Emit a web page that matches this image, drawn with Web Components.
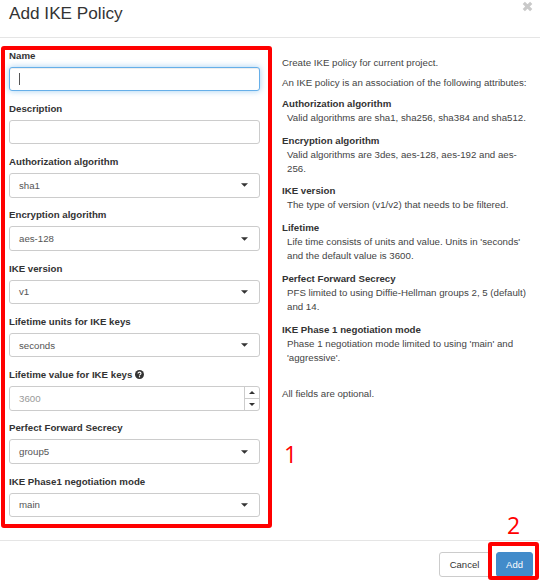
<!DOCTYPE html>
<html><head><meta charset="utf-8">
<style>
html,body{margin:0;padding:0;background:#fff}
body{font-family:"Liberation Sans",Arial,sans-serif;color:#333;width:540px;height:580px;overflow:hidden}
</style></head><body>
<ike-modal>
  <span slot="title">Add IKE Policy</span>
  <form-field label="Name"><text-box focused></text-box></form-field>
  <form-field label="Description"><text-box></text-box></form-field>
  <form-field label="Authorization algorithm"><select-box value="sha1"></select-box></form-field>
  <form-field label="Encryption algorithm"><select-box value="aes-128"></select-box></form-field>
  <form-field label="IKE version"><select-box value="v1"></select-box></form-field>
  <form-field label="Lifetime units for IKE keys"><select-box value="seconds"></select-box></form-field>
  <form-field label="Lifetime value for IKE keys" help><number-box placeholder="3600"></number-box></form-field>
  <form-field label="Perfect Forward Secrecy"><select-box value="group5"></select-box></form-field>
  <form-field label="IKE Phase1 negotiation mode"><select-box value="main"></select-box></form-field>
  <help-panel slot="help"></help-panel>
</ike-modal>
<script>
function def(name, css, html){
  customElements.define(name, class extends HTMLElement{
    connectedCallback(){
      if(this.shadowRoot) return;
      const r=this.attachShadow({mode:"open"});
      r.innerHTML="<style>"+css+"</style>"+(typeof html==="function"?html(this):html);
    }
  });
}
const caret='<svg width="7" height="4" viewBox="0 0 8 4"><path d="M0 0H8L4 4Z" fill="#333"/></svg>';
def("ike-modal",`
:host{display:block;position:relative;width:540px;height:580px;overflow:hidden}
header{height:37px;border-bottom:1px solid #e5e5e5;box-sizing:content-box;display:flex;justify-content:space-between;position:relative}
h4{margin:0;padding:3px 0 0 9px;font-size:17.2px;font-weight:400;line-height:20px;color:#333}
.x{padding:1px 7px 0 0}
.x svg{display:block}
main{height:502px;display:flex;box-sizing:border-box;padding-top:11px}
.l{width:251px;margin-left:9px;position:relative;flex:none}
.r{margin-left:22px;width:250px;flex:none;padding-top:7px}
footer{border-top:1px solid #e5e5e5;height:39px;display:flex;justify-content:flex-end;gap:5px;padding:11px 7px 0 0;box-sizing:border-box}
button{font:9.5px "Liberation Sans",Arial,sans-serif;height:25px;border-radius:3px;border:1px solid #ccc;background:#fff;color:#333;padding:0;margin:0}
.c{width:52px;padding-right:1px}
.a{width:37px;background:#428bca;border-color:#428bca;color:#fff}
.box{position:absolute;border:4px solid #f00;border-radius:3px;box-sizing:border-box;pointer-events:none}
.b1{left:1px;top:46px;width:271px;height:482px}
.b2{left:488px;top:542px;width:51px;height:38px}
.n{position:absolute;color:#f00;font-family:"Open Sans",sans-serif;font-weight:400;font-size:23px;line-height:28px}
.n1{left:284px;top:440px}
.n2{left:507px;top:511px}
`,`<header><h4><slot name="title"></slot></h4><span class="x" aria-label="close"><svg width="11" height="11" viewBox="0 0 11 11"><path d="M1.8 1.8L9.2 9.2M9.2 1.8L1.8 9.2" stroke="#c9c9c9" stroke-width="3.2"/></svg></span></header>
<main><div class="l"><slot></slot></div><div class="r"><slot name="help"></slot></div></main>
<footer><button class="c">Cancel</button><button class="a">Add</button></footer>
<div class="box b1"></div><div class="box b2"></div><span class="n n1">1</span><span class="n n2">2</span>`);
def("form-field",`
:host{display:block;height:53.25px}
label{display:flex;align-items:center;gap:3px;height:12px;margin-bottom:5.5px;font-size:9.7px;font-weight:700;color:#333;white-space:nowrap}
svg{display:block}
`,h=>`<label>${h.getAttribute("label")}${h.hasAttribute("help")?'<svg width="9" height="9" viewBox="0 0 9 9"><circle cx="4.5" cy="4.5" r="4.5" fill="#333"/><path d="M3 3.5C3 1.7 6 1.7 6 3.5C6 4.6 4.5 4.5 4.5 5.5" fill="none" stroke="#fff" stroke-width="1.1"/><rect x="3.9" y="6.1" width="1.2" height="1.2" fill="#fff"/></svg>':""}</label><slot></slot>`);
def("text-box",`
:host{display:block;height:24.5px;box-sizing:border-box;border:1px solid #ccc;border-radius:3px;background:#fff;padding:5px 9px}
:host([focused]){border-color:#66afe9;box-shadow:inset 0 1px 1px rgba(0,0,0,.075),0 0 6px rgba(102,175,233,.6)}
i{display:block;width:1px;height:12px;background:#555}
`,h=>h.hasAttribute("focused")?"<i></i>":"");
def("select-box",`
:host{display:flex;align-items:center;justify-content:space-between;height:24.5px;box-sizing:border-box;border:1px solid #ccc;border-radius:3px;background:#fff;padding:0 11px 0 9px;font-size:9.7px;color:#555}
svg{display:block}
`,h=>`<span>${h.getAttribute("value")}</span>${caret}`);
def("number-box",`
:host{display:flex;height:24.5px;box-sizing:border-box;border:1px solid #ccc;border-radius:3px;background:#fff;font-size:9.7px;color:#999}
span{flex:1;align-self:center;padding-left:9px}
.s{width:14px;flex:none;border-left:1px solid #ccc;display:flex;flex-direction:column}
.s b{flex:1;display:flex;align-items:center;justify-content:center}
.s b+b{border-top:1px solid #ccc}
svg{display:block;width:6px;height:3px}
`,h=>`<span>${h.getAttribute("placeholder")}</span><div class="s"><b><svg viewBox="0 0 8 4"><path d="M0 4H8L4 0Z" fill="#333"/></svg></b><b><svg viewBox="0 0 8 4"><path d="M0 0H8L4 4Z" fill="#333"/></svg></b></div>`);
def("help-panel",`
:host{display:block;font-size:9.7px;line-height:14px;color:#444}
p{margin:0 0 6.4px}
h5{margin:0;font-size:9.7px;line-height:14px;font-weight:700;color:#333}
div{padding-left:5px}
section{margin-bottom:8.8px}
.end{margin-top:22px}
`,`<p>Create IKE policy for current project.</p>
<p>An IKE policy is an association of the following attributes:</p>
<section><h5>Authorization algorithm</h5><div>Valid algorithms are sha1, sha256, sha384 and sha512.</div></section>
<section><h5>Encryption algorithm</h5><div>Valid algorithms are 3des, aes-128, aes-192 and aes-256.</div></section>
<section><h5>IKE version</h5><div>The type of version (v1/v2) that needs to be filtered.</div></section>
<section><h5>Lifetime</h5><div>Life time consists of units and value. Units in 'seconds' and the default value is 3600.</div></section>
<section><h5>Perfect Forward Secrecy</h5><div>PFS limited to using Diffie-Hellman groups 2, 5 (default) and 14.</div></section>
<section><h5>IKE Phase 1 negotiation mode</h5><div>Phase 1 negotiation mode limited to using 'main' and 'aggressive'.</div></section>
<p class="end">All fields are optional.</p>`);
</script>
</body></html>
